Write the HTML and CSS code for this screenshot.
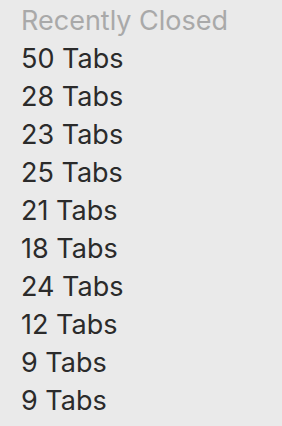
FILE: index.html
```html
<!DOCTYPE html>
<html lang="en">
<head>
<meta charset="UTF-8">
<meta name="viewport" content="width=device-width, initial-scale=1">
<title>Recently Closed</title>
<link rel="stylesheet" href="styles.css">
</head>
<body>

<div class="menu">
  <div class="menu-header">Recently Closed</div>
  <div class="menu-item">50 Tabs</div>
  <div class="menu-item">28 Tabs</div>
  <div class="menu-item">23 Tabs</div>
  <div class="menu-item">25 Tabs</div>
  <div class="menu-item">21 Tabs</div>
  <div class="menu-item">18 Tabs</div>
  <div class="menu-item">24 Tabs</div>
  <div class="menu-item">12 Tabs</div>
  <div class="menu-item">9 Tabs</div>
  <div class="menu-item">9 Tabs</div>
</div>

</body>
</html>
```

FILE: styles.css
```css
html,body{margin:0;padding:0;height:100%;}
body{background:#eaeaea;font-family:Inter,"Noto Sans",sans-serif;}
.menu{padding:2px 0 0 21px;}
.menu-header,.menu-item{font-size:27px;line-height:38px;white-space:nowrap;}
.menu-header{color:#a9a9a9;}
.menu-item{color:#2b2b2b;}
```
